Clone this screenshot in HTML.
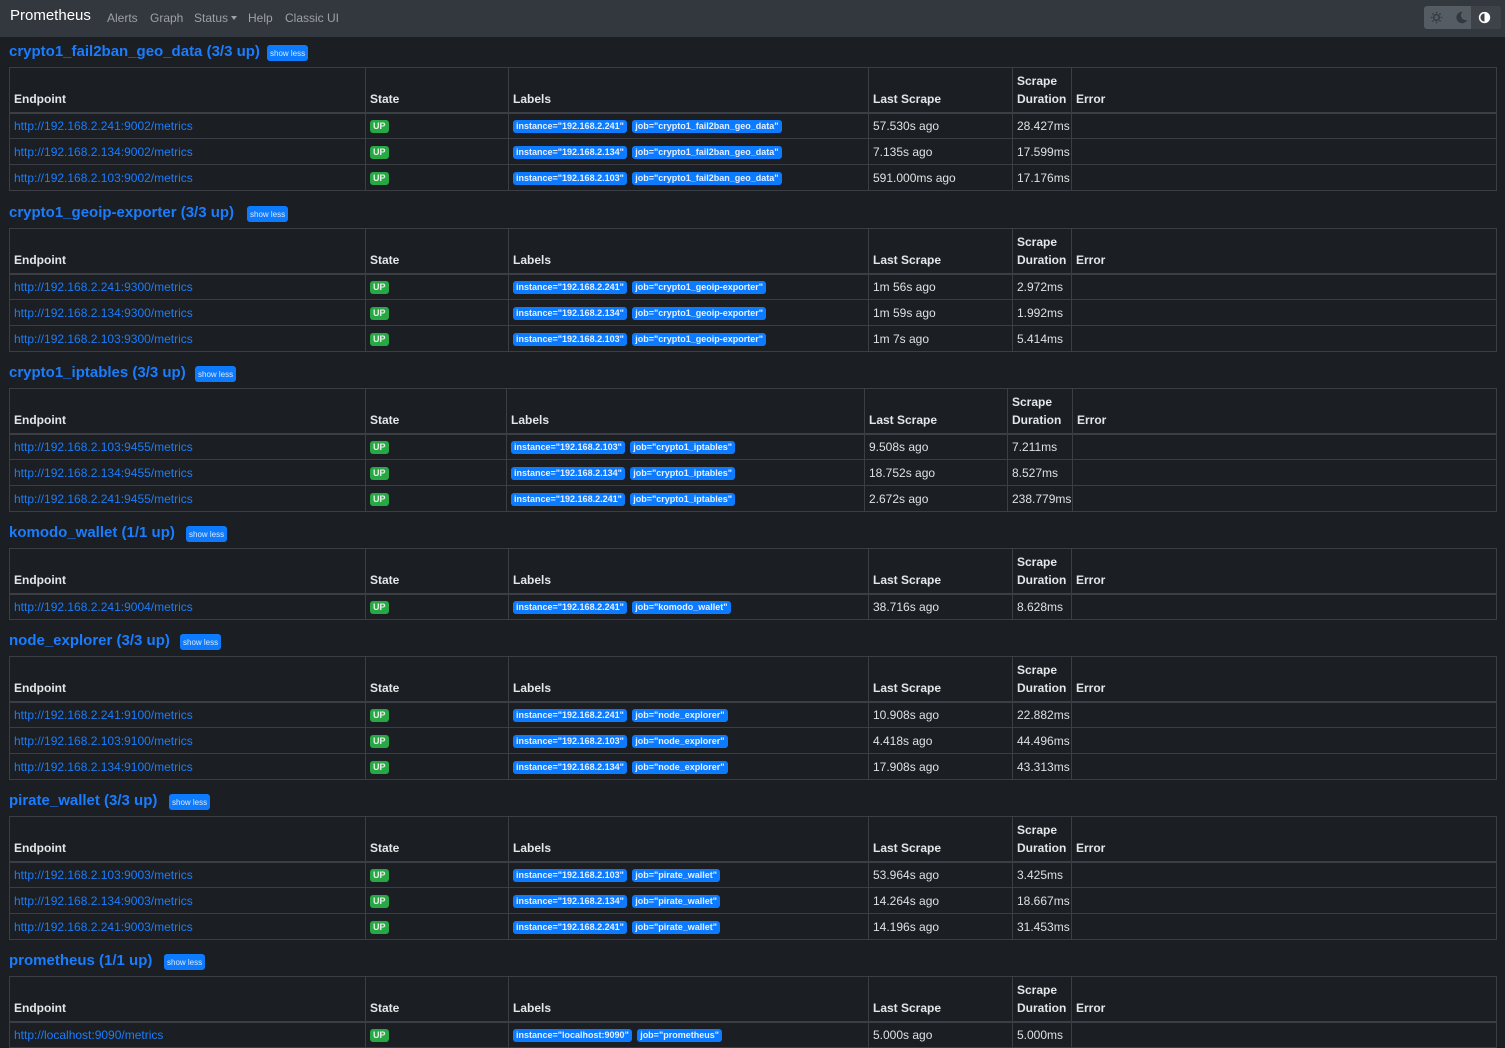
<!DOCTYPE html>
<html><head><meta charset="utf-8">
<style>
*{box-sizing:border-box;margin:0;padding:0}
body{width:1505px;height:1029px;overflow:hidden;background:#1b1e22;font-family:"Liberation Sans",sans-serif;color:#dfe1e4;font-size:12px}
.nav{height:37px;background:#33373e;position:relative}
.brand{position:absolute;left:10px;top:7px;font-size:15px;color:#fff}
.nl{position:absolute;top:11px;font-size:12px;color:#9da1a6}
.caret{display:inline-block;width:0;height:0;border-left:3px solid transparent;border-right:3px solid transparent;border-top:4px solid #9da1a6;vertical-align:2px;margin-left:3px}
.tg{position:absolute;left:1424px;top:6px;width:77px;height:23px;background:#565c64;border-radius:3px}
.tg .on{position:absolute;right:0;top:0;width:30px;height:23px;background:#3e4349;border-radius:0 3px 3px 0}
.sec{padding-left:9px}
.h{height:30px;position:relative}
.h span{position:absolute;left:0;top:6px;font-size:15px;font-weight:bold;color:#1a7dff}
.btn{position:absolute;top:8px;height:16px;background:#0d7bff;color:#dde8f8;font-size:8px;border-radius:3px;padding:4px 3px 0}
table{width:1488px;border-collapse:collapse;table-layout:fixed;margin-bottom:6px}
table.t1{margin-bottom:7px}
td,th{border:1px solid #3b3e44;padding:0 4px;text-align:left;white-space:nowrap;overflow:hidden}
th{height:45px;vertical-align:bottom;padding-bottom:4px;font-weight:bold;font-size:12px;line-height:18px;color:#e4e6e9;border-bottom:2px solid #3b3e44}
td{height:26px;vertical-align:middle}
a{color:#1a7dff;text-decoration:none}
.up{display:inline-block;background:#28a745;color:#e6f3e8;font-size:9px;font-weight:bold;padding:2px 3px;border-radius:3px;line-height:9px}
.lb{display:inline-block;background:#0d7bff;color:#e6efff;font-size:9px;font-weight:bold;padding:2px 3px;border-radius:3px;line-height:9px;margin-right:2px}
</style></head><body>
<div class="nav">
<div class="brand">Prometheus</div>
<div class="nl" style="left:107px">Alerts</div>
<div class="nl" style="left:150px">Graph</div>
<div class="nl" style="left:194px">Status<span class="caret"></span></div>
<div class="nl" style="left:248px">Help</div>
<div class="nl" style="left:285px">Classic UI</div>
<div class="tg"><div class="on"></div>
<svg style="position:absolute;left:6px;top:5px" width="13" height="13" viewBox="0 0 16 16"><circle cx="8" cy="8" r="3.5" fill="none" stroke="#33373e" stroke-width="1.6"/><g stroke="#33373e" stroke-width="1.6"><path d="M8 1v2M8 13v2M1 8h2M13 8h2M3 3l1.4 1.4M11.6 11.6L13 13M3 13l1.4-1.4M11.6 4.4L13 3"/></g></svg>
<svg style="position:absolute;left:31px;top:5px" width="13" height="13" viewBox="0 0 16 16"><path d="M9 1a7 7 0 1 0 6 10A6 6 0 0 1 9 1z" fill="#33373e"/></svg>
<svg style="position:absolute;left:54px;top:5px" width="13" height="13" viewBox="0 0 16 16"><circle cx="8" cy="8" r="6" fill="none" stroke="#fff" stroke-width="2"/><path d="M8 2a6 6 0 0 1 0 12z" fill="#fff"/></svg>
</div>
</div>

<div class="sec">
<div class="h"><span>crypto1_fail2ban_geo_data (3/3 up)</span><div class="btn" style="left:258px">show less</div></div>
<table class="t1"><colgroup><col style="width:356px"><col style="width:143px"><col style="width:360px"><col style="width:144px"><col style="width:59px"><col></colgroup>
<tr><th>Endpoint</th><th>State</th><th>Labels</th><th>Last Scrape</th><th>Scrape<br>Duration</th><th>Error</th></tr>
<tr><td><a>http://192.168.2.241:9002/metrics</a></td><td><span class="up">UP</span></td><td><span class="lb">instance="192.168.2.241"</span> <span class="lb">job="crypto1_fail2ban_geo_data"</span></td><td>57.530s ago</td><td>28.427ms</td><td></td></tr>
<tr><td><a>http://192.168.2.134:9002/metrics</a></td><td><span class="up">UP</span></td><td><span class="lb">instance="192.168.2.134"</span> <span class="lb">job="crypto1_fail2ban_geo_data"</span></td><td>7.135s ago</td><td>17.599ms</td><td></td></tr>
<tr><td><a>http://192.168.2.103:9002/metrics</a></td><td><span class="up">UP</span></td><td><span class="lb">instance="192.168.2.103"</span> <span class="lb">job="crypto1_fail2ban_geo_data"</span></td><td>591.000ms ago</td><td>17.176ms</td><td></td></tr>
</table>

<div class="h"><span>crypto1_geoip-exporter (3/3 up)</span><div class="btn" style="left:238px">show less</div></div>
<table><colgroup><col style="width:356px"><col style="width:143px"><col style="width:360px"><col style="width:144px"><col style="width:59px"><col></colgroup>
<tr><th>Endpoint</th><th>State</th><th>Labels</th><th>Last Scrape</th><th>Scrape<br>Duration</th><th>Error</th></tr>
<tr><td><a>http://192.168.2.241:9300/metrics</a></td><td><span class="up">UP</span></td><td><span class="lb">instance="192.168.2.241"</span> <span class="lb">job="crypto1_geoip-exporter"</span></td><td>1m 56s ago</td><td>2.972ms</td><td></td></tr>
<tr><td><a>http://192.168.2.134:9300/metrics</a></td><td><span class="up">UP</span></td><td><span class="lb">instance="192.168.2.134"</span> <span class="lb">job="crypto1_geoip-exporter"</span></td><td>1m 59s ago</td><td>1.992ms</td><td></td></tr>
<tr><td><a>http://192.168.2.103:9300/metrics</a></td><td><span class="up">UP</span></td><td><span class="lb">instance="192.168.2.103"</span> <span class="lb">job="crypto1_geoip-exporter"</span></td><td>1m 7s ago</td><td>5.414ms</td><td></td></tr>
</table>

<div class="h"><span>crypto1_iptables (3/3 up)</span><div class="btn" style="left:186px">show less</div></div>
<table><colgroup><col style="width:356px"><col style="width:141px"><col style="width:358px"><col style="width:143px"><col style="width:65px"><col></colgroup>
<tr><th>Endpoint</th><th>State</th><th>Labels</th><th>Last Scrape</th><th>Scrape<br>Duration</th><th>Error</th></tr>
<tr><td><a>http://192.168.2.103:9455/metrics</a></td><td><span class="up">UP</span></td><td><span class="lb">instance="192.168.2.103"</span> <span class="lb">job="crypto1_iptables"</span></td><td>9.508s ago</td><td>7.211ms</td><td></td></tr>
<tr><td><a>http://192.168.2.134:9455/metrics</a></td><td><span class="up">UP</span></td><td><span class="lb">instance="192.168.2.134"</span> <span class="lb">job="crypto1_iptables"</span></td><td>18.752s ago</td><td>8.527ms</td><td></td></tr>
<tr><td><a>http://192.168.2.241:9455/metrics</a></td><td><span class="up">UP</span></td><td><span class="lb">instance="192.168.2.241"</span> <span class="lb">job="crypto1_iptables"</span></td><td>2.672s ago</td><td>238.779ms</td><td></td></tr>
</table>

<div class="h"><span>komodo_wallet (1/1 up)</span><div class="btn" style="left:177px">show less</div></div>
<table><colgroup><col style="width:356px"><col style="width:143px"><col style="width:360px"><col style="width:144px"><col style="width:59px"><col></colgroup>
<tr><th>Endpoint</th><th>State</th><th>Labels</th><th>Last Scrape</th><th>Scrape<br>Duration</th><th>Error</th></tr>
<tr><td><a>http://192.168.2.241:9004/metrics</a></td><td><span class="up">UP</span></td><td><span class="lb">instance="192.168.2.241"</span> <span class="lb">job="komodo_wallet"</span></td><td>38.716s ago</td><td>8.628ms</td><td></td></tr>
</table>

<div class="h"><span>node_explorer (3/3 up)</span><div class="btn" style="left:171px">show less</div></div>
<table><colgroup><col style="width:356px"><col style="width:143px"><col style="width:360px"><col style="width:144px"><col style="width:59px"><col></colgroup>
<tr><th>Endpoint</th><th>State</th><th>Labels</th><th>Last Scrape</th><th>Scrape<br>Duration</th><th>Error</th></tr>
<tr><td><a>http://192.168.2.241:9100/metrics</a></td><td><span class="up">UP</span></td><td><span class="lb">instance="192.168.2.241"</span> <span class="lb">job="node_explorer"</span></td><td>10.908s ago</td><td>22.882ms</td><td></td></tr>
<tr><td><a>http://192.168.2.103:9100/metrics</a></td><td><span class="up">UP</span></td><td><span class="lb">instance="192.168.2.103"</span> <span class="lb">job="node_explorer"</span></td><td>4.418s ago</td><td>44.496ms</td><td></td></tr>
<tr><td><a>http://192.168.2.134:9100/metrics</a></td><td><span class="up">UP</span></td><td><span class="lb">instance="192.168.2.134"</span> <span class="lb">job="node_explorer"</span></td><td>17.908s ago</td><td>43.313ms</td><td></td></tr>
</table>

<div class="h"><span>pirate_wallet (3/3 up)</span><div class="btn" style="left:160px">show less</div></div>
<table><colgroup><col style="width:356px"><col style="width:143px"><col style="width:360px"><col style="width:144px"><col style="width:59px"><col></colgroup>
<tr><th>Endpoint</th><th>State</th><th>Labels</th><th>Last Scrape</th><th>Scrape<br>Duration</th><th>Error</th></tr>
<tr><td><a>http://192.168.2.103:9003/metrics</a></td><td><span class="up">UP</span></td><td><span class="lb">instance="192.168.2.103"</span> <span class="lb">job="pirate_wallet"</span></td><td>53.964s ago</td><td>3.425ms</td><td></td></tr>
<tr><td><a>http://192.168.2.134:9003/metrics</a></td><td><span class="up">UP</span></td><td><span class="lb">instance="192.168.2.134"</span> <span class="lb">job="pirate_wallet"</span></td><td>14.264s ago</td><td>18.667ms</td><td></td></tr>
<tr><td><a>http://192.168.2.241:9003/metrics</a></td><td><span class="up">UP</span></td><td><span class="lb">instance="192.168.2.241"</span> <span class="lb">job="pirate_wallet"</span></td><td>14.196s ago</td><td>31.453ms</td><td></td></tr>
</table>

<div class="h"><span>prometheus (1/1 up)</span><div class="btn" style="left:155px">show less</div></div>
<table><colgroup><col style="width:356px"><col style="width:143px"><col style="width:360px"><col style="width:144px"><col style="width:59px"><col></colgroup>
<tr><th>Endpoint</th><th>State</th><th>Labels</th><th>Last Scrape</th><th>Scrape<br>Duration</th><th>Error</th></tr>
<tr><td><a>http://localhost:9090/metrics</a></td><td><span class="up">UP</span></td><td><span class="lb">instance="localhost:9090"</span> <span class="lb">job="prometheus"</span></td><td>5.000s ago</td><td>5.000ms</td><td></td></tr>
</table>
</div>
</body></html>
